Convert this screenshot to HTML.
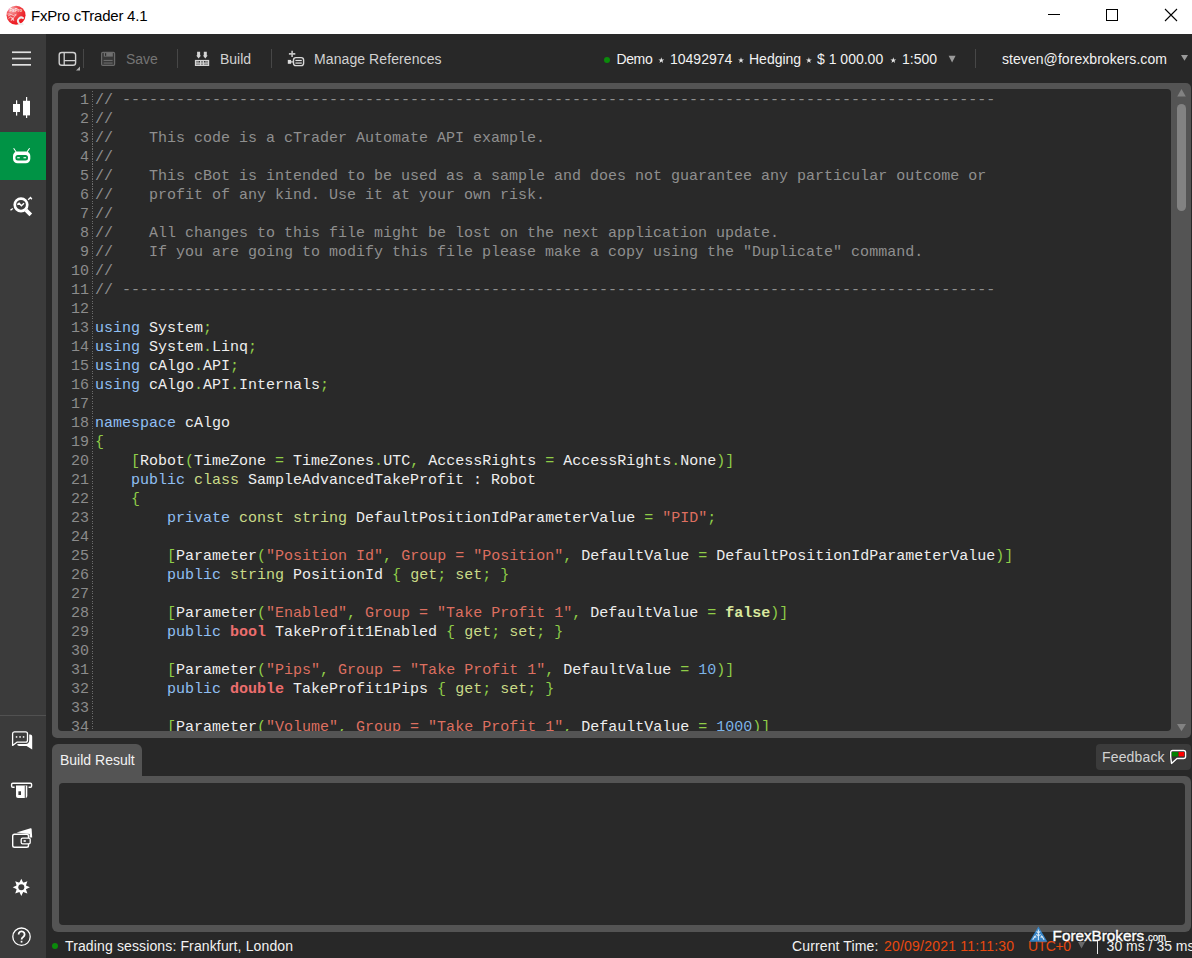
<!DOCTYPE html>
<html><head><meta charset="utf-8"><title>FxPro cTrader 4.1</title>
<style>
*{box-sizing:border-box;margin:0;padding:0}
html,body{width:1192px;height:958px;overflow:hidden;background:#282828;font-family:"Liberation Sans",sans-serif;}
body{position:relative;color:#e6e6e6;font-size:14px}
.abs{position:absolute}
#title{left:0;top:0;width:1192px;height:34px;background:#fff;color:#000}
#title .t{position:absolute;left:31px;top:6px;font-size:15px;letter-spacing:-0.24px;line-height:20px;color:#000;white-space:nowrap}
#side{left:0;top:34px;width:46px;height:924px;background:#3b3b3b}
#side .act{position:absolute;left:0;top:98px;width:46px;height:48px;background:#009345}
#side .sep{position:absolute;left:0;top:681px;width:46px;height:1px;background:#515151}
#tb{left:46px;top:34px;width:1146px;height:49px;background:#282828}
.tx{position:absolute;white-space:nowrap;font-size:14px;line-height:16px}
.vsep{position:absolute;width:1px;background:#474747}
#code{left:52px;top:83px;width:1139px;height:655px;background:#545454;border-radius:5px}
#codein{position:absolute;left:6px;top:6px;width:1113px;height:642px;background:#292929;border-radius:4px;overflow:hidden}
#ln,#src{position:absolute;top:2px;font-family:"Liberation Mono",monospace;font-size:15px;line-height:19px;white-space:pre}
#ln{left:0;width:31px;text-align:right;color:#8c8c8c}
#src{left:37px;color:#eeeeee}
#dots{position:absolute;left:34px;top:2px;width:1px;height:640px;background:repeating-linear-gradient(to bottom,#6c6c6c 0,#6c6c6c 1px,transparent 1px,transparent 2.5px)}
.c{color:#8f8f8f}.k{color:#90bff3}.t{color:#cadb87}.p{color:#8fcd48}.s{color:#dd6f60}.n{color:#7db3e6}
.b{color:#ec6e6e;font-weight:bold}.f{color:#d9e89e;font-weight:bold}
#bot{left:52px;top:776px;width:1139px;height:156px;background:#545454;border-radius:0 6px 6px 6px}
#botin{position:absolute;left:7px;top:7px;width:1126px;height:142px;background:#292929;border-radius:4px}
#tab{left:52px;top:744px;width:90px;height:33px;background:#545454;border-radius:6px 6px 0 0}
#fb{left:1096px;top:744px;width:95px;height:26px;background:#3b3b3b;border-radius:4px}
#status{left:46px;top:932px;width:1146px;height:26px;overflow:hidden}

svg{position:absolute;overflow:visible}
.w{color:#f2f2f2}.g{color:#d2d2d2}.dis{color:#747474}.red{color:#e8480f}
.dot{position:absolute;width:6px;height:6px;border-radius:3px;background:#0b8a0b}
</style></head><body>
<div id="title" class="abs"><span class="t">FxPro cTrader 4.1</span>
<svg style="left:6px;top:5px" width="20" height="20" viewBox="6 5 20 20"><defs><radialGradient id="rg" cx="30%" cy="22%" r="75%"><stop offset="0" stop-color="#f8b4b6"/><stop offset=".45" stop-color="#f04a4f"/><stop offset="1" stop-color="#ec1b22"/></radialGradient></defs><circle cx="16.05" cy="15.25" r="9.5" fill="url(#rg)"/><text x="9.6" y="12" font-family="Liberation Sans, sans-serif" font-weight="bold" font-size="4.6" fill="#fff" fill-opacity=".85" textLength="12.6" lengthAdjust="spacingAndGlyphs">FxPro</text><g stroke="#fff" stroke-opacity=".6" stroke-width="1" fill="none"><path d="M7.2 14h3.4M8 16l3-1.6 2.4 1.2 3-1.4M8.4 18.4l2.6-1.6 1.8 2.6 1.6-3 2-1.4"/><path d="M11 20.6l1.6-2.2 1.2 2.4" stroke-width="1.4"/></g><path d="M23.7 18.6A3.3 3.3 0 1 0 23.4 23.4" stroke="#eee" stroke-width="1.9" fill="none"/></svg>
<svg style="left:1048px;top:14px" width="12" height="2"><rect x="0" y="0" width="12" height="1" fill="#000"/></svg>
<svg style="left:1106px;top:9px" width="12" height="12"><rect x=".5" y=".5" width="11" height="11" fill="none" stroke="#000" stroke-width="1"/></svg>
<svg style="left:1165px;top:9px" width="12" height="12"><path d="M0 0L12 12M12 0L0 12" stroke="#000" stroke-width="1.1" fill="none"/></svg>
</div>
<div id="side" class="abs"><div class="act"></div><div class="sep"></div>
<svg style="left:0;top:0" width="46" height="924" viewBox="0 34 46 924" fill="none" stroke="none">
<!-- hamburger -->
<g fill="#e0e0e0"><rect x="12" y="51.4" width="19" height="1.7"/><rect x="12" y="57.7" width="19" height="1.7"/><rect x="12" y="64" width="19" height="1.7"/></g>
<!-- candles -->
<g fill="#fff"><rect x="13" y="104" width="7" height="8"/><rect x="16" y="100.3" width="1.2" height="15.3"/><rect x="23" y="100.8" width="7" height="14.6"/><rect x="26" y="97" width="1.2" height="21"/></g>
<!-- bot -->
<g><rect x="13" y="151.4" width="17.3" height="11.8" rx="4.5" fill="#fff"/><rect x="15.4" y="155" width="12.6" height="5.4" rx="2.5" fill="#009345"/><rect x="17.2" y="157.2" width="2.6" height="1.1" fill="#fff"/><rect x="23.5" y="157.2" width="2.6" height="1.1" fill="#fff"/><path d="M13.6 148.3L16.2 152M29.6 148.3L27 152" stroke="#fff" stroke-width="1.1"/></g>
<!-- search -->
<g stroke="#fff" fill="none"><circle cx="21" cy="204.8" r="6.25" stroke-width="2.7"/><path d="M26 210.2L30.8 214.8" stroke-width="3.8"/><path d="M17.3 204.6l1.8-1.4 2.3 2.6 2.6-2.5" stroke-width="1.4"/><path d="M28.2 199.7l2.3-2.1 1.3 1.7M10.5 210.3l2.3-1.8" stroke-width="1.4"/></g>
<!-- chat -->
<g><path d="M18 734.6h12.2a2 2 0 0 1 2 2v12.8l-5.6-3.4H19.2a2 2 0 0 1-2-2z" fill="#fff"/><path d="M14.4 731.8h11.2a1.9 1.9 0 0 1 1.9 1.9v6.6a1.9 1.9 0 0 1-1.9 1.9H16.9l-4.3 3.2v-11.7a1.9 1.9 0 0 1 1.8-1.9z" fill="#3b3b3b" stroke="#3b3b3b" stroke-width="3.4"/><path d="M14.4 731.8h11.2a1.9 1.9 0 0 1 1.9 1.9v6.6a1.9 1.9 0 0 1-1.9 1.9H16.9l-4.3 3.2v-11.7a1.9 1.9 0 0 1 1.8-1.9z" fill="#3b3b3b" stroke="#fff" stroke-width="1.3" stroke-linejoin="round"/><rect x="15.8" y="736.2" width="1.5" height="1.5" fill="#fff"/><rect x="19.3" y="736.2" width="1.5" height="1.5" fill="#fff"/><rect x="22.8" y="736.2" width="1.5" height="1.5" fill="#fff"/></g>
<!-- deposit -->
<g><path d="M14.6 787.2h-1.8a1.2 1.2 0 0 1-1.2-1.2v-1.6a1.2 1.2 0 0 1 1.2-1.2h17.6a1.2 1.2 0 0 1 1.2 1.2v1.6a1.2 1.2 0 0 1-1.2 1.2h-1.8" stroke="#fff" stroke-width="1.4" fill="none"/><path d="M16 785.4h11.3v10.6a2 2 0 0 1-2 2h-7.3a2 2 0 0 1-2-2z" fill="#fff"/><rect x="24.7" y="785.4" width="1.3" height="12.6" fill="#6a6a6a"/><rect x="18.4" y="791.3" width="2.6" height="3.7" fill="#3b3b3b"/></g>
<!-- wallet -->
<g><path d="M16.5 832.6L30.6 828.2a.8.8 0 0 1 1 .6l.6 8.6h-2.6v-3.4z" fill="#fff"/><rect x="12.7" y="834.2" width="15.8" height="13" rx="1.8" stroke="#fff" stroke-width="1.4" fill="#3b3b3b"/><rect x="21.2" y="838.2" width="9" height="5.6" rx="1.4" stroke="#fff" stroke-width="1.3" fill="#3b3b3b"/><rect x="23.6" y="840.2" width="2.2" height="1.6" fill="#fff"/></g>
<!-- gear -->
<g transform="translate(21.3 887.3)"><path fill="#fff" d="M0-8.6L1.9-4.6L6.1-6.1L4.6-1.9L8.6 0L4.6 1.9L6.1 6.1L1.9 4.6L0 8.6L-1.9 4.6L-6.1 6.1L-4.6 1.9L-8.6 0L-4.6-1.9L-6.1-6.1L-1.9-4.6Z"/><circle r="5" fill="#fff"/><circle r="3" fill="#3b3b3b"/></g>
<!-- help -->
<g><circle cx="21.5" cy="936.7" r="8.7" stroke="#fff" stroke-width="1.3"/><path d="M18.6 934.4a3 3 0 1 1 4.6 2.5c-1.2.8-1.6 1.3-1.6 2.6" stroke="#fff" stroke-width="1.8"/><rect x="20.7" y="940.8" width="1.7" height="1.8" fill="#fff"/></g>
</svg></div>
<div id="tb" class="abs"></div>
<svg style="left:0;top:0" width="1192" height="84" viewBox="0 0 1192 84" fill="none">
<!-- layout icon -->
<rect x="59.2" y="52.5" width="16.4" height="12.8" rx="2.6" stroke="#d0d0d0" stroke-width="1.4"/><path d="M64.2 52.5v12.8M64.2 60.7h11.4" stroke="#d0d0d0" stroke-width="1.3"/><path d="M80 66.4v4h-4z" fill="#b0b0b0"/>
<!-- save icon -->
<g><rect x="101.6" y="52.4" width="13" height="13" rx="1.2" stroke="#6a6a6a" stroke-width="1.2" fill="#383838"/><rect x="103.8" y="52.8" width="9" height="3.8" fill="#707070"/><rect x="105" y="53.2" width="1.2" height="2.6" fill="#2c2c2c"/><rect x="103.6" y="59.9" width="9" height="1.1" fill="#6a6a6a"/><rect x="103.6" y="62.5" width="9" height="1.1" fill="#6a6a6a"/></g>
<!-- build icon -->
<g fill="#d4d4d4"><path d="M197.1 51.8h3v3.7h.9l-2.4 2.9-2.4-2.9h.9z"/><path d="M203.8 51.8h3v3.7h.9l-2.4 2.9-2.4-2.9h.9z"/><rect x="194.9" y="59.9" width="14.3" height="6.1"/></g>
<g fill="#7a7a7a"><rect x="196.1" y="61.1" width="3.9" height="1.5"/><rect x="201" y="61.1" width="2.1" height="1.5"/><rect x="204.1" y="61.1" width="3.9" height="1.5"/><rect x="196.1" y="63.4" width="3.9" height="1.6" fill="#909090"/><rect x="201" y="63.4" width="2.1" height="1.6" fill="#909090"/><rect x="204.1" y="63.4" width="3.9" height="1.6" fill="#909090"/></g>
<g fill="#2a2a2a"><rect x="198.9" y="61.1" width="1" height="1.2"/><rect x="204.1" y="61.1" width="1" height="1.2"/></g>
<!-- manage refs icon -->
<g><path d="M288.9 53.9h6.4M292.1 50.7v6.4" stroke="#c4c4c4" stroke-width="1.6"/><rect x="287.8" y="59.9" width="3.3" height="3.9" fill="#dcdcdc"/><rect x="291" y="61.3" width="2" height="1.2" fill="#dcdcdc"/><rect x="293.5" y="57.6" width="10.1" height="8" rx="2.4" stroke="#d8d8d8" stroke-width="1.4"/><rect x="295.4" y="59.9" width="6.4" height="1.2" fill="#e0e0e0"/><rect x="295.4" y="62.2" width="6.4" height="1.8" fill="#a4a4a4"/></g>
<!-- stars -->
<polygon points="661.30,57.30 662.01,59.43 664.25,59.44 662.44,60.77 663.12,62.91 661.30,61.60 659.48,62.91 660.16,60.77 658.35,59.44 660.59,59.43" fill="#e8e8e8"/><polygon points="741.00,57.30 741.71,59.43 743.95,59.44 742.14,60.77 742.82,62.91 741.00,61.60 739.18,62.91 739.86,60.77 738.05,59.44 740.29,59.43" fill="#e8e8e8"/><polygon points="808.90,57.30 809.61,59.43 811.85,59.44 810.04,60.77 810.72,62.91 808.90,61.60 807.08,62.91 807.76,60.77 805.95,59.44 808.19,59.43" fill="#e8e8e8"/><polygon points="893.30,57.30 894.01,59.43 896.25,59.44 894.44,60.77 895.12,62.91 893.30,61.60 891.48,62.91 892.16,60.77 890.35,59.44 892.59,59.43" fill="#e8e8e8"/>
<path d="M948.6 55.8h7l-3.5 6.8z" fill="#9a9a9a"/>
<path d="M1181 55h7l-3.5 5.8z" fill="#9a9a9a"/>
</svg>
<div class="vsep" style="left:83px;top:49px;height:19px"></div>
<div class="vsep" style="left:177px;top:49px;height:19px"></div>
<div class="vsep" style="left:271px;top:49px;height:19px"></div>
<div class="vsep" style="left:975px;top:49px;height:19px"></div>
<div class="tx dis" style="left:126px;top:51px">Save</div>
<div class="tx g" style="left:220px;top:51px">Build</div>
<div class="tx g" style="left:314px;top:51px;letter-spacing:.09px">Manage References</div>
<div class="dot" style="left:604px;top:57px"></div>
<div class="tx w" style="left:616.4px;top:51px;letter-spacing:-.35px">Demo</div>
<div class="tx w" style="left:670px;top:51px">10492974</div>
<div class="tx w" style="left:749px;top:51px">Hedging</div>
<div class="tx w" style="left:817px;top:51px">$ 1 000.00</div>
<div class="tx w" style="left:902px;top:51px">1:500</div>
<div class="tx w" style="left:1002px;top:51px;letter-spacing:.06px">steven@forexbrokers.com</div>
<div id="code" class="abs"><div id="codein"><div id="dots"></div><div id="ln">1
2
3
4
5
6
7
8
9
10
11
12
13
14
15
16
17
18
19
20
21
22
23
24
25
26
27
28
29
30
31
32
33
34</div><div id="src"><span class="c">// -------------------------------------------------------------------------------------------------</span>
<span class="c">//</span>
<span class="c">//    This code is a cTrader Automate API example.</span>
<span class="c">//</span>
<span class="c">//    This cBot is intended to be used as a sample and does not guarantee any particular outcome or</span>
<span class="c">//    profit of any kind. Use it at your own risk.</span>
<span class="c">//</span>
<span class="c">//    All changes to this file might be lost on the next application update.</span>
<span class="c">//    If you are going to modify this file please make a copy using the "Duplicate" command.</span>
<span class="c">//</span>
<span class="c">// -------------------------------------------------------------------------------------------------</span>

<span class="k">using</span> System<span class="p">;</span>
<span class="k">using</span> System<span class="p">.</span>Linq<span class="p">;</span>
<span class="k">using</span> cAlgo<span class="p">.</span>API<span class="p">;</span>
<span class="k">using</span> cAlgo<span class="p">.</span>API<span class="p">.</span>Internals<span class="p">;</span>

<span class="k">namespace</span> cAlgo
<span class="p">{</span>
    <span class="p">[</span>Robot<span class="p">(</span>TimeZone <span class="p">=</span> TimeZones<span class="p">.</span>UTC<span class="p">,</span> AccessRights <span class="p">=</span> AccessRights<span class="p">.</span>None<span class="p">)</span><span class="p">]</span>
    <span class="k">public</span> <span class="t">class</span> SampleAdvancedTakeProfit : Robot
    <span class="p">{</span>
        <span class="k">private</span> <span class="t">const</span> <span class="t">string</span> DefaultPositionIdParameterValue <span class="p">=</span> <span class="s">"PID"</span><span class="p">;</span>

        <span class="p">[</span>Parameter<span class="p">(</span><span class="s">"Position Id"</span><span class="p">,</span> <span class="s">Group = "Position"</span><span class="p">,</span> DefaultValue <span class="p">=</span> DefaultPositionIdParameterValue<span class="p">)</span><span class="p">]</span>
        <span class="k">public</span> <span class="t">string</span> PositionId <span class="p">{</span> <span class="t">get</span><span class="p">;</span> <span class="t">set</span><span class="p">;</span> <span class="p">}</span>

        <span class="p">[</span>Parameter<span class="p">(</span><span class="s">"Enabled"</span><span class="p">,</span> <span class="s">Group = "Take Profit 1"</span><span class="p">,</span> DefaultValue <span class="p">=</span> <span class="f">false</span><span class="p">)</span><span class="p">]</span>
        <span class="k">public</span> <span class="b">bool</span> TakeProfit1Enabled <span class="p">{</span> <span class="t">get</span><span class="p">;</span> <span class="t">set</span><span class="p">;</span> <span class="p">}</span>

        <span class="p">[</span>Parameter<span class="p">(</span><span class="s">"Pips"</span><span class="p">,</span> <span class="s">Group = "Take Profit 1"</span><span class="p">,</span> DefaultValue <span class="p">=</span> <span class="n">10</span><span class="p">)</span><span class="p">]</span>
        <span class="k">public</span> <span class="b">double</span> TakeProfit1Pips <span class="p">{</span> <span class="t">get</span><span class="p">;</span> <span class="t">set</span><span class="p">;</span> <span class="p">}</span>

        <span class="p">[</span>Parameter<span class="p">(</span><span class="s">"Volume"</span><span class="p">,</span> <span class="s">Group = "Take Profit 1"</span><span class="p">,</span> DefaultValue <span class="p">=</span> <span class="n">1000</span><span class="p">)</span><span class="p">]</span></div></div></div>
<svg style="left:1171px;top:83px" width="20" height="655" viewBox="1171 83 20 655"><path d="M1181.5 89L1185.8 96.6H1177.2z" fill="#828282"/><rect x="1177" y="104" width="9" height="107" rx="4.5" fill="#828282"/><path d="M1181.5 731.2L1186 724.1H1177z" fill="#828282"/></svg>
<div id="tab" class="abs"></div>
<div class="tx w" style="left:60px;top:752px">Build Result</div>
<div id="fb" class="abs"></div>
<div class="tx g" style="left:1102px;top:749px;letter-spacing:.16px">Feedback</div>
<svg style="left:1168px;top:748px" width="20" height="18" viewBox="1168 748 20 18"><path d="M1172.6 750.5H1183.6A2 2 0 0 1 1185.6 752.5V756.5A2 2 0 0 1 1183.6 758.5H1177L1171.5 763.4L1170.7 757V752.5A2 2 0 0 1 1172.6 750.5Z" fill="#333" stroke="#222" stroke-width="2.4" stroke-opacity=".5"/><path d="M1172.6 750.5H1183.6A2 2 0 0 1 1185.6 752.5V756.5A2 2 0 0 1 1183.6 758.5H1177L1171.5 763.4L1170.7 757V752.5A2 2 0 0 1 1172.6 750.5Z" fill="#333" stroke="#fff" stroke-width="1.4" stroke-linejoin="round"/><rect x="1171.9" y="752" width="6.1" height="4.4" fill="#008000"/><rect x="1178.7" y="752" width="5.5" height="4.4" fill="#f00"/></svg>
<div id="bot" class="abs"><div id="botin"></div></div>
<div id="status" class="abs">
<div class="dot" style="left:6px;top:10.6px"></div>
<div class="tx w" style="left:19px;top:6px;letter-spacing:.13px">Trading sessions: Frankfurt, London</div>
<div class="tx w" style="left:746px;top:6px;letter-spacing:.13px">Current Time:</div>
<div class="tx red" style="left:838px;top:6px;letter-spacing:.21px">20/09/2021 11:11:30</div>
<div class="tx red" style="left:982px;top:6px;letter-spacing:-.4px">UTC+0</div>
<svg style="left:1032px;top:10px" width="7" height="7"><path d="M0 0h7l-3.5 6.5z" fill="#6a6a6a"/></svg>
<div style="position:absolute;left:1051px;top:9px;width:1px;height:13px;background:#e8e8e8"></div>
<div class="tx w" style="left:1060.6px;top:6px">30 ms / 35 ms</div>
</div>
<svg style="left:1029px;top:925px" width="140" height="22" viewBox="1029 925 140 22"><path d="M1038.4 926.6L1047.4 941.8H1029.4z" fill="#3583c6"/><g stroke="#fff" stroke-width="1.1" fill="none" stroke-opacity=".8"><path d="M1038.4 929.6v10.6M1036.6 931.4l1.8 1.6 1.8-1.6M1036.2 934.4l2.2 1.4 2.2-1.4"/><path d="M1032.8 939.8c.6-2.2 2-3.2 3.6-2.6M1044 939.8c-.6-2.2-2-3.2-3.6-2.6M1034 937.2l1.6-1.6M1042.8 937.2l-1.6-1.6"/></g>
<text x="1052.6" y="940.8" font-family="Liberation Sans, sans-serif" font-size="15.3" fill="#fff" stroke="#fff" stroke-width=".35" textLength="91.5" lengthAdjust="spacingAndGlyphs">ForexBrokers</text><text x="1145.2" y="940.8" font-family="Liberation Sans, sans-serif" font-size="10" fill="#fff" stroke="#fff" stroke-width=".2" textLength="21" lengthAdjust="spacingAndGlyphs">.com</text></svg>
</body></html>
